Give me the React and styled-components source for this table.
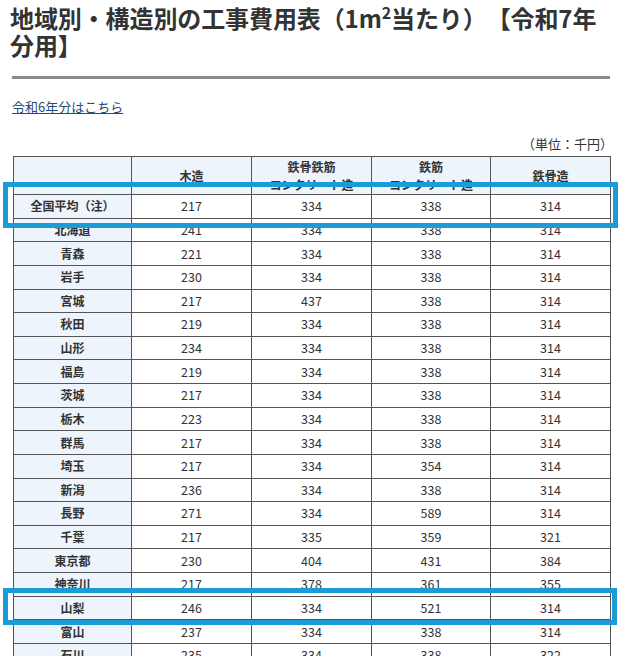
import React from 'react';
import styled, { createGlobalStyle } from 'styled-components';

const GlobalStyle = createGlobalStyle`
    body {
        margin: 0;
        background: #fff;
        font-family: "Noto Sans CJK JP", "Noto Sans", sans-serif;
        color: #333;
    }
`

const Page = styled.div`
    position: relative;
    width: 620px;
    height: 656px;
    overflow: hidden;
    padding: 4px 10px 0 10px;
    box-sizing: border-box;
`

const Title = styled.h1`
    margin: 0;
    width: 600px;
    font-size: 24px;
    line-height: 27px;
    font-weight: 700;
    color: #333;
    letter-spacing: -0.1px;
    text-spacing-trim: space-all;
`

const Sup = styled.sup`
    font-size: 16px;
    line-height: 0;
`

const Rule = styled.hr`
    margin: 18px 0 0 2px;
    width: 598px;
    border: none;
    height: 3px;
    background: #8a8a8a;
`

const Link = styled.a`
    display: inline-block;
    margin: 19px 0 0 2px;
    font-size: 13px;
    line-height: 18px;
    color: #1f4d7c;
    text-decoration: underline;
`

const Unit = styled.div`
    margin-top: 18px;
    width: 603px;
    text-align: right;
    font-size: 13px;
    line-height: 18px;
    color: #333;
    text-spacing-trim: space-all;
`

const Table = styled.table`
    margin: 3px 0 0 3px;
    width: 597px;
    border-collapse: collapse;
    table-layout: fixed;
    font-size: 12.5px;
    color: #333;
`

const Head = styled.th`
    height: 37px;
    padding: 0;
    border: 1px solid #555;
    background: #eef4fc;
    font-weight: 700;
    font-size: 12px;
    line-height: 18px;
    vertical-align: middle;
    text-align: center;
`

const Row = styled.tr`
    height: 23.63px;
`

const Name = styled.td`
    padding: 0;
    border: 1px solid #555;
    background: #eef4fc;
    font-weight: 700;
    font-size: 12px;
    text-align: center;
    line-height: 16px;
    text-spacing-trim: space-all;
`

const Cell = styled.td`
    padding: 0;
    border: 1px solid #555;
    text-align: center;
    line-height: 16px;
`

const Marker = styled.div`
    position: absolute;
    left: 3px;
    top: ${p => p.$top}px;
    width: ${p => p.$width}px;
    height: ${p => p.$height}px;
    border: 5px solid #1b9bd7;
    box-sizing: border-box;
    pointer-events: none;
`

const columns = ['木造', '鉄骨鉄筋\nコンクリート造', '鉄筋\nコンクリート造', '鉄骨造'];

const rows = [
    ['全国平均（注）', 217, 334, 338, 314],
    ['北海道', 241, 334, 338, 314],
    ['青森', 221, 334, 338, 314],
    ['岩手', 230, 334, 338, 314],
    ['宮城', 217, 437, 338, 314],
    ['秋田', 219, 334, 338, 314],
    ['山形', 234, 334, 338, 314],
    ['福島', 219, 334, 338, 314],
    ['茨城', 217, 334, 338, 314],
    ['栃木', 223, 334, 338, 314],
    ['群馬', 217, 334, 338, 314],
    ['埼玉', 217, 334, 354, 314],
    ['新潟', 236, 334, 338, 314],
    ['長野', 271, 334, 589, 314],
    ['千葉', 217, 335, 359, 321],
    ['東京都', 230, 404, 431, 384],
    ['神奈川', 217, 378, 361, 355],
    ['山梨', 246, 334, 521, 314],
    ['富山', 237, 334, 338, 314],
    ['石川', 235, 334, 338, 322],
    ['福井', 229, 334, 338, 314],
];

export default function App()
{
    return (
        <Page>
            <GlobalStyle />
            <Title>地域別・構造別の工事費用表（1m<Sup>2</Sup>当たり）【令和7年分用】</Title>
            <Rule />
            <Link href="#">令和6年分はこちら</Link>
            <Unit>（単位：千円）</Unit>
            <Table>
                <colgroup>
                    <col style={{ width: '118px' }} />
                    <col style={{ width: '120px' }} />
                    <col style={{ width: '120px' }} />
                    <col style={{ width: '119px' }} />
                    <col style={{ width: '120px' }} />
                </colgroup>
                <thead>
                    <tr>
                        <Head />
                        {columns.map(c => (
                            <Head key={c}>
                                {c.split('\n').map((line, i) => (
                                    <React.Fragment key={i}>{i > 0 && <br />}{line}</React.Fragment>
                                ))}
                            </Head>
                        ))}
                    </tr>
                </thead>
                <tbody>
                    {rows.map(r => (
                        <Row key={r[0]}>
                            <Name>{r[0]}</Name>
                            {r.slice(1).map((v, i) => <Cell key={i}>{v}</Cell>)}
                        </Row>
                    ))}
                </tbody>
            </Table>
            <Marker $top={182} $width={615} $height={46} />
            <Marker $top={588} $width={614} $height={37} />
        </Page>
    )
}
